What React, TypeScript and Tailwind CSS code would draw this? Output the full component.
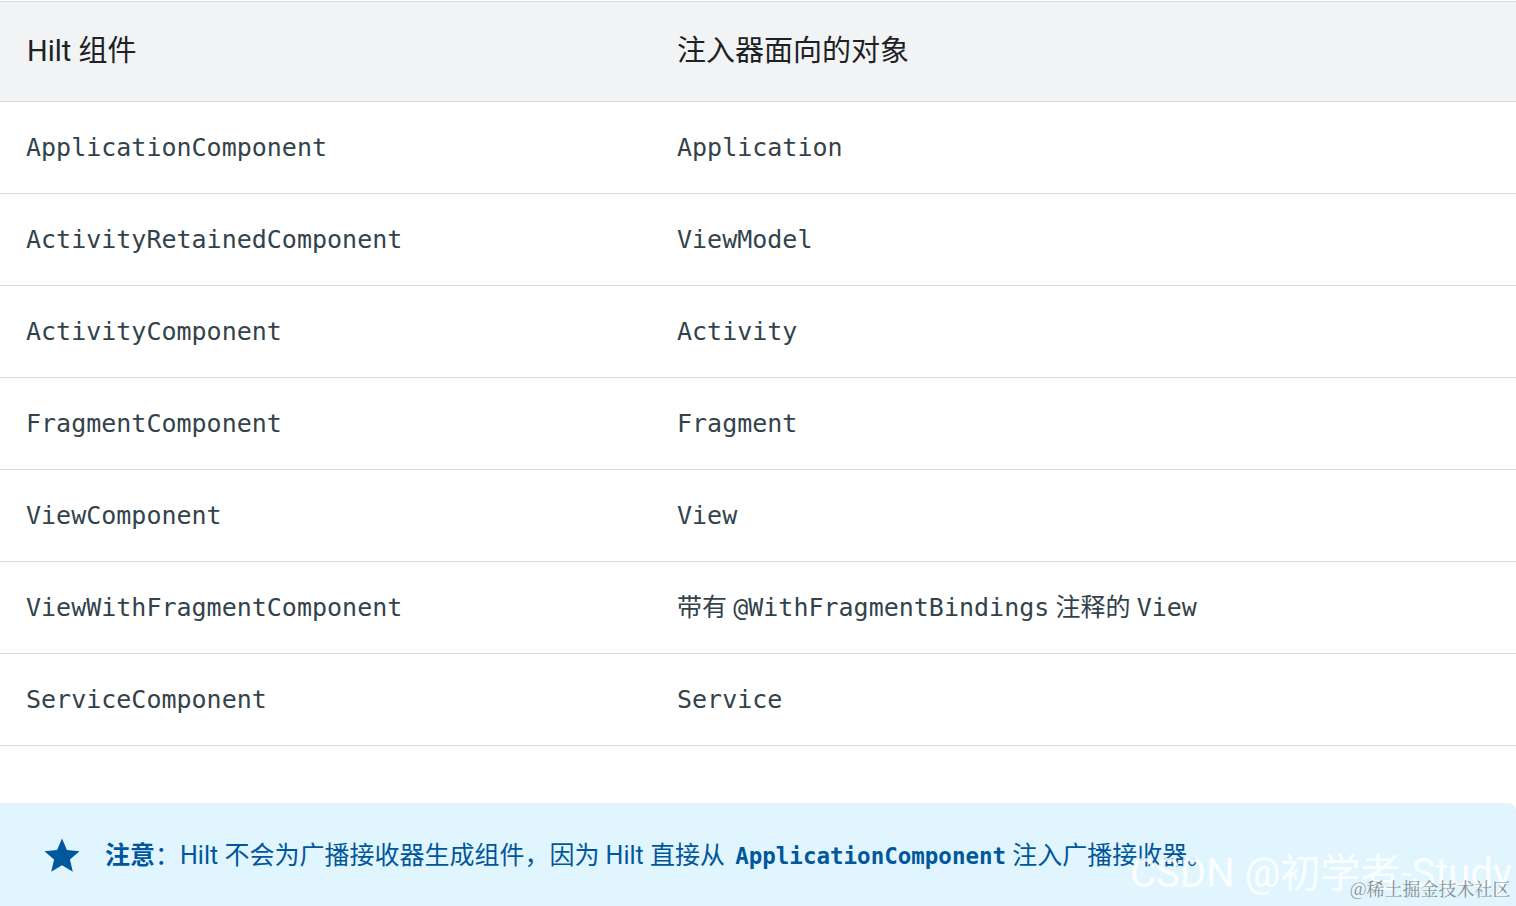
const ROWS: { comp: string; target: React.ReactNode }[] = [
  { comp: 'ApplicationComponent', target: 'Application' },
  { comp: 'ActivityRetainedComponent', target: 'ViewModel' },
  { comp: 'ActivityComponent', target: 'Activity' },
  { comp: 'FragmentComponent', target: 'Fragment' },
  { comp: 'ViewComponent', target: 'View' },
  {
    comp: 'ViewWithFragmentComponent',
    target: (
      <>
        <span className="font-['Roboto','Noto_Sans_CJK_SC',sans-serif]">带有 </span>@WithFragmentBindings
        <span className="font-['Roboto','Noto_Sans_CJK_SC',sans-serif]"> 注释的 </span>View
      </>
    ),
  },
  { comp: 'ServiceComponent', target: 'Service' },
];

const mono = "font-['DejaVu_Sans_Mono','Liberation_Mono',monospace]";

function Star() {
  return (
    <svg viewBox="0 0 24 24" className="w-[42px] h-[42px] fill-[#01579b]">
      <path d="M12 17.27L18.18 21l-1.64-7.03L22 9.24l-7.19-.61L12 2 9.19 8.63 2 9.24l5.46 4.73L5.82 21z" />
    </svg>
  );
}

export default function App() {
  return (
    <div className="relative w-[1516px] h-[906px] overflow-hidden bg-white font-['Roboto','Noto_Sans_CJK_SC',sans-serif]">
      <div className="pt-px">
        {/* header */}
        <div className="grid grid-cols-[650px_1fr] h-[101px] items-center bg-[#f1f3f4] border-y border-[#dadce0] text-[29px] text-[#202124]">
          <div className="pl-[27px]">Hilt 组件</div>
          <div className="pl-[27px]">注入器面向的对象</div>
        </div>

        {/* rows */}
        {ROWS.map((r) => (
          <div
            key={r.comp}
            className={`grid grid-cols-[650px_1fr] h-[92px] items-center border-b border-[#dadce0] text-[25px] text-[#33434b] ${mono}`}
          >
            <div className="pl-[26px]">{r.comp}</div>
            <div className="pl-[27px]">{r.target}</div>
          </div>
        ))}
      </div>

      {/* note */}
      <div className="mt-[57px] h-[110px] rounded-tr-lg bg-[#e1f5fe] flex items-center pl-[41px] pb-[4px] text-[#01579b] text-[25px]">
        <Star />
        <div className="ml-[22px] whitespace-nowrap">
          <span className="font-bold">注意</span>：Hilt 不会为广播接收器生成组件，因为 Hilt 直接从{' '}
          <span className={`${mono} font-bold text-[22.5px] ml-[4px]`}>ApplicationComponent</span> 注入广播接收器。
        </div>
      </div>

      {/* watermarks */}
      <div className="absolute left-[1130px] top-[854px] text-[40px] leading-none text-white/85 whitespace-nowrap">
        CSDN @初学者-Study
      </div>
      <div className="absolute left-[1350px] top-[879px] text-[18px] leading-none text-[#8a8f94] whitespace-nowrap font-['Noto_Serif_CJK_SC','Liberation_Serif',serif]">
        @稀土掘金技术社区
      </div>
    </div>
  );
}
